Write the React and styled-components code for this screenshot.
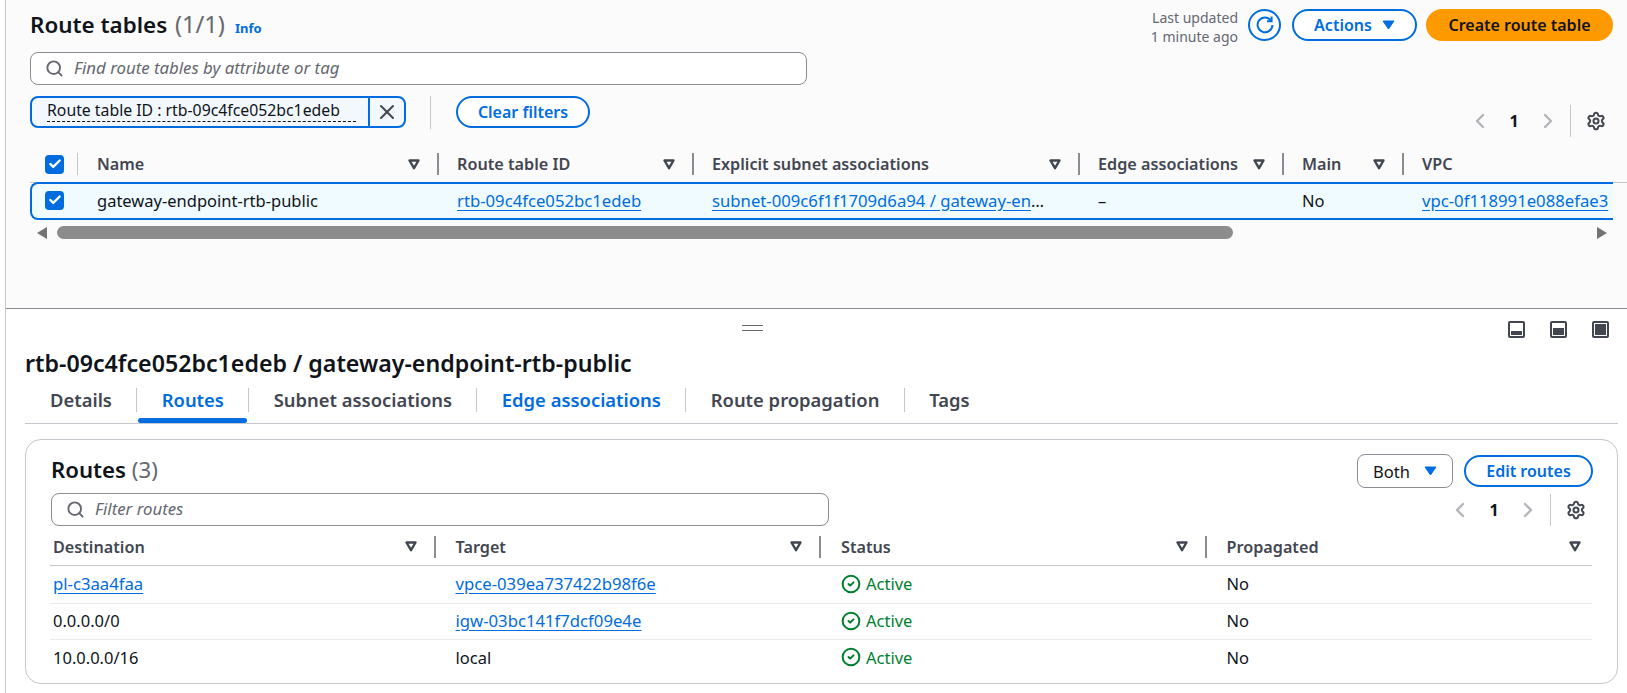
import React from "react"
import styled, { createGlobalStyle } from "styled-components"
import { Check, ChevronLeft, ChevronRight, CircleCheck, Search, Settings, X } from "lucide-react"

const Global = createGlobalStyle`
    html, body {
        margin: 0;
        padding: 0;
        background: #fff;
    }
    body {
        font-family: "Noto Sans", "Open Sans", sans-serif;
        font-size: 16.5px;
        color: #0f141a;
    }
    * {
        box-sizing: border-box;
    }
`

const blue = "#006ce0"
const grey = "#424650"

const topColumns = "49px 360px 255px 386px 204px 120px 209px"
const rowColumns = "47px 360px 255px 386px 204px 120px 209px"

const SortIcon = () => (
    <SortSvg viewBox="0 0 12 11">
        <path d="M1.5 1.5h9L6 9.2z" fill="none" stroke={grey} strokeWidth="2.4" strokeLinejoin="round" />
    </SortSvg>
)

const Caret = () => (
    <CaretSvg viewBox="0 0 13 10">
        <path d="M1 1h11L6.5 9z" fill={blue} stroke={blue} strokeWidth="1" strokeLinejoin="round" />
    </CaretSvg>
)

const Pager = ({ $top }) => (
    <PagerWrap $top={$top}>
        <ChevronLeft size={24} color="#b4b4bb" strokeWidth={2.4} />
        <PageNum>1</PageNum>
        <ChevronRight size={24} color="#b4b4bb" strokeWidth={2.4} />
        <PagerBar />
        <Settings size={20} color={grey} strokeWidth={2.4} />
    </PagerWrap>
)

const Box = () => (
    <CheckBox>
        <Check size={14} color="#fff" strokeWidth={4} />
    </CheckBox>
)

const TopHead = ({ label, last }) => (
    <HeadCell>
        <HeadLabel>{label}</HeadLabel>
        {!last && <SortIcon />}
        {!last && <Resizer />}
    </HeadCell>
)

const PanelIcon = ({ fill }) => (
    <PanelSvg viewBox="0 0 17 17">
        <rect x="1" y="1" width="15" height="15" rx="1" fill="none" stroke={grey} strokeWidth="2" />
        <rect x="3" y={17 - 3 - fill} width="11" height={fill} fill={grey} />
    </PanelSvg>
)

const routes = [
    { dest: "pl-c3aa4faa", destLink: true, target: "vpce-039ea737422b98f6e", targetLink: true },
    { dest: "0.0.0.0/0", target: "igw-03bc141f7dcf09e4e", targetLink: true },
    { dest: "10.0.0.0/16", target: "local" },
]

const tabs = ["Details", "Routes", "Subnet associations", "Edge associations", "Route propagation", "Tags"]

export default function App() {
    return (
        <Shell>
            <Global />
            <TopPanel>
                <HeaderRow>
                    <TitleGroup>
                        <PageTitle>Route tables <TitleCount>(1/1)</TitleCount></PageTitle>
                        <InfoLink>Info</InfoLink>
                    </TitleGroup>
                    <Updated>Last updated<br />1 minute ago</Updated>
                    <RefreshButton>
                        <svg width="22" height="22" viewBox="0 0 22 22" fill="none" stroke={blue} strokeWidth="2">
                            <path d="M17 6.5A7.4 7.4 0 1 0 18.4 11" />
                            <path d="M17.6 2.6V7.2H13" />
                        </svg>
                    </RefreshButton>
                    <OutlineButton $width={125}>Actions <Caret /></OutlineButton>
                    <PrimaryButton>Create route table</PrimaryButton>
                </HeaderRow>
                <SearchBox $width={777} $top={11}>
                    <Search size={19} color="#656871" strokeWidth={2.4} />
                    <Placeholder>Find route tables by attribute or tag</Placeholder>
                </SearchBox>
                <FilterRow>
                    <Token>
                        <TokenText>Route table ID : rtb-09c4fce052bc1edeb</TokenText>
                        <TokenClose><X size={24} color={grey} strokeWidth={2} /></TokenClose>
                    </Token>
                    <FilterBar />
                    <OutlineButton $width={134}>Clear filters</OutlineButton>
                    <Pager $top={9} />
                </FilterRow>
                <TopGrid>
                    <SelectCell><Box /><SelectBar /></SelectCell>
                    <TopHead label="Name" />
                    <TopHead label="Route table ID" />
                    <TopHead label="Explicit subnet associations" />
                    <TopHead label="Edge associations" />
                    <TopHead label="Main" />
                    <TopHead label="VPC" last />
                </TopGrid>
                <SelectedRow>
                    <RowSelect><Box /></RowSelect>
                    <BodyCell>gateway-endpoint-rtb-public</BodyCell>
                    <BodyCell><Link>rtb-09c4fce052bc1edeb</Link></BodyCell>
                    <BodyCell><Link>subnet-009c6f1f1709d6a94 / gateway-en</Link>…</BodyCell>
                    <BodyCell>–</BodyCell>
                    <BodyCell>No</BodyCell>
                    <BodyCell><Link>vpc-0f118991e088efae3</Link></BodyCell>
                </SelectedRow>
                <ScrollBar>
                    <ScrollArrow />
                    <ScrollThumb />
                    <ScrollArrow $right />
                </ScrollBar>
            </TopPanel>
            <BottomPanel>
                <ToolRow>
                    <DragHandle />
                    <PanelIcons>
                        <PanelIcon fill={4} />
                        <PanelIcon fill={7} />
                        <PanelIcon fill={11} />
                    </PanelIcons>
                </ToolRow>
                <DetailTitle>rtb-09c4fce052bc1edeb / gateway-endpoint-rtb-public</DetailTitle>
                <TabList>
                    {tabs.map((tab) => (
                        <Tab key={tab} $active={tab === "Routes"} $blue={tab === "Routes" || tab === "Edge associations"} $last={tab === "Tags"}>
                            {tab}
                        </Tab>
                    ))}
                </TabList>
                <Card>
                    <CardHeader>
                        <CardTitle>Routes <Count>(3)</Count></CardTitle>
                        <BothSelect>Both <Caret /></BothSelect>
                        <OutlineButton $width={129}>Edit routes</OutlineButton>
                    </CardHeader>
                    <CardFilter>
                        <SearchBox $width={778} $top={0}>
                            <Search size={19} color="#656871" strokeWidth={2.4} />
                            <Placeholder>Filter routes</Placeholder>
                        </SearchBox>
                        <Pager $top={1} />
                    </CardFilter>
                    <RoutesHead>
                        <RouteHeadCell $first><HeadLabel>Destination</HeadLabel><SortIcon /><Resizer /></RouteHeadCell>
                        <RouteHeadCell><HeadLabel>Target</HeadLabel><SortIcon /><Resizer /></RouteHeadCell>
                        <RouteHeadCell><HeadLabel>Status</HeadLabel><SortIcon /><Resizer /></RouteHeadCell>
                        <RouteHeadCell $last><HeadLabel>Propagated</HeadLabel><SortIcon /></RouteHeadCell>
                    </RoutesHead>
                    {routes.map((route, i) => (
                        <RouteRow key={route.dest} $tall={i === 0} $last={i === routes.length - 1}>
                            <RouteCell $first>{route.destLink ? <Link>{route.dest}</Link> : route.dest}</RouteCell>
                            <RouteCell>{route.targetLink ? <Link>{route.target}</Link> : route.target}</RouteCell>
                            <RouteCell><Status><CircleCheck size={20} strokeWidth={2.4} />Active</Status></RouteCell>
                            <RouteCell>No</RouteCell>
                        </RouteRow>
                    ))}
                </Card>
            </BottomPanel>
        </Shell>
    )
}

const Shell = styled.div`
    width: 1622px;
    height: 693px;
    margin-left: 5px;
    border-left: 1px solid #c6c6cd;
    overflow: hidden;
`

const TopPanel = styled.section`
    height: 309px;
    padding: 9px 0 0 24px;
    background: #fbfbfb;
    border-bottom: 1px solid #8c8c94;
`

const HeaderRow = styled.div`
    display: flex;
    align-items: center;
    height: 32px;
    width: 1583px;
`

const TitleGroup = styled.div`
    display: flex;
    align-items: baseline;
    margin-right: auto;
    margin-top: -3px;
`

const PageTitle = styled.h1`
    margin: 0;
    font-size: 22.4px;
    font-weight: 600;
    color: #0f141a;
`

const Count = styled.span`
    font-weight: 400;
    color: #656871;
`

const TitleCount = styled(Count)`
    margin-left: 2px;
    font-size: 23.6px;
`

const InfoLink = styled.span`
    margin-left: 10px;
    font-size: 13px;
    font-weight: 700;
    color: ${blue};
`

const Updated = styled.div`
    width: 100px;
    padding-top: 4px;
    text-align: right;
    font-size: 14px;
    line-height: 19px;
    color: #656871;
    white-space: nowrap;
`

const RefreshButton = styled.div`
    width: 33px;
    height: 32px;
    margin-left: 10px;
    border: 2px solid ${blue};
    border-radius: 50%;
    background: #fff;
    display: flex;
    align-items: center;
    justify-content: center;
`

const OutlineButton = styled.div`
    width: ${(p) => p.$width}px;
    height: 32px;
    margin-left: 11px;
    border: 2px solid ${blue};
    border-radius: 20px;
    background: #fff;
    color: ${blue};
    font-weight: 600;
    font-size: 16px;
    display: flex;
    align-items: center;
    justify-content: center;
    gap: 10px;
`

const PrimaryButton = styled.div`
    width: 187px;
    height: 32px;
    margin-left: 9px;
    border-radius: 20px;
    background: #ff9900;
    color: #0f141a;
    font-weight: 600;
    font-size: 16px;
    display: flex;
    align-items: center;
    justify-content: center;
`

const CaretSvg = styled.svg`
    width: 13px;
    height: 10px;
`

const SearchBox = styled.div`
    width: ${(p) => p.$width}px;
    height: 33px;
    margin-top: ${(p) => p.$top}px;
    padding-left: 14px;
    border: 1px solid #8c8c94;
    border-radius: 8px;
    background: #fff;
    display: flex;
    align-items: center;
    gap: 10px;
`

const Placeholder = styled.span`
    font-style: italic;
    font-size: 16.8px;
    color: #656871;
    margin-top: -2px;
`

const FilterRow = styled.div`
    display: flex;
    align-items: flex-start;
    height: 41px;
    margin-top: 11px;
    width: 1583px;
`

const Token = styled.div`
    width: 376px;
    height: 32px;
    border: 2px solid ${blue};
    border-radius: 8px;
    background: #f2f8fd;
    display: flex;
    align-items: stretch;
`

const TokenText = styled.span`
    flex: 1;
    margin: 2px 12px 4px 15px;
    font-size: 15.8px;
    line-height: 21px;
    white-space: nowrap;
    border-bottom: 1px dashed #0f141a;
`

const TokenClose = styled.span`
    width: 36px;
    border-left: 2px solid ${blue};
    display: flex;
    align-items: center;
    justify-content: center;
`

const FilterBar = styled.div`
    width: 1px;
    height: 33px;
    margin-left: 24px;
    background: #c6c6cd;
    margin-right: 14px;
`

const PagerWrap = styled.div`
    display: flex;
    align-items: center;
    height: 32px;
    margin-top: ${(p) => p.$top}px;
    margin-left: auto;
    padding-right: 7px;
`

const PageNum = styled.span`
    width: 44px;
    text-align: center;
    font-weight: 700;
    font-size: 16px;
`

const PagerBar = styled.div`
    width: 1px;
    height: 32px;
    margin-left: 10px;
    margin-right: 15px;
    background: #c6c6cd;
`

const TopGrid = styled.div`
    display: grid;
    grid-template-columns: ${topColumns};
    height: 37px;
    margin-top: 9px;
    border-bottom: 1px solid #c6c6cd;
`

const SelectCell = styled.div`
    display: flex;
    align-items: center;
    padding-left: 15px;
`

const SelectBar = styled.div`
    width: 1px;
    height: 22px;
    margin-left: 13px;
    background: #c6c6cd;
`

const CheckBox = styled.div`
    width: 19px;
    height: 19px;
    border-radius: 4px;
    background: ${blue};
    display: flex;
    align-items: center;
    justify-content: center;
`

const HeadCell = styled.div`
    display: flex;
    align-items: center;
    min-width: 0;
    padding-left: 18px;
`

const HeadLabel = styled.span`
    flex: 1;
    font-weight: 600;
    font-size: 16.2px;
    color: ${grey};
    white-space: nowrap;
`

const SortSvg = styled.svg`
    width: 12px;
    height: 11px;
    flex: none;
`

const Resizer = styled.div`
    width: 2px;
    height: 22px;
    margin-left: 17px;
    background: #8c8c94;
    flex: none;
`

const SelectedRow = styled.div`
    display: grid;
    grid-template-columns: ${rowColumns};
    height: 38px;
    width: 1583px;
    padding-bottom: 2px;
    border: 2px solid ${blue};
    border-right: none;
    border-radius: 8px 0 0 8px;
    background: #f0fbff;
    margin-top: -1px;
    align-items: center;
`

const RowSelect = styled.div`
    padding-left: 13px;
    display: flex;
`

const BodyCell = styled.div`
    padding-left: 18px;
    white-space: nowrap;
    overflow: hidden;
`

const Link = styled.span`
    color: ${blue};
    font-size: 16.7px;
    text-decoration: underline;
    text-underline-offset: 3px;
`

const ScrollBar = styled.div`
    display: flex;
    align-items: center;
    gap: 10px;
    width: 1583px;
    height: 13px;
    margin-top: 6px;
    padding: 0 6px 0 7px;
`

const ScrollArrow = styled.div`
    width: 0;
    height: 0;
    border-top: 6px solid transparent;
    border-bottom: 6px solid transparent;
    border-${(p) => (p.$right ? "left" : "right")}: 10px solid #737373;
    margin-left: ${(p) => (p.$right ? "auto" : "0")};
`

const ScrollThumb = styled.div`
    width: 1176px;
    height: 13px;
    border-radius: 7px;
    background: #8c8c8c;
`

const BottomPanel = styled.section`
    padding: 12px 9px 0 19px;
    background: #fff;
`

const ToolRow = styled.div`
    display: flex;
    align-items: flex-start;
    height: 17px;
    padding-left: 717px;
    padding-right: 9px;
`

const DragHandle = styled.div`
    width: 21px;
    height: 6px;
    margin-top: 4px;
    border-top: 1px solid #656871;
    border-bottom: 1px solid #656871;
`

const PanelIcons = styled.div`
    display: flex;
    gap: 25px;
    margin-left: auto;
`

const PanelSvg = styled.svg`
    width: 17px;
    height: 17px;
`

const DetailTitle = styled.h2`
    margin: 10px 0 0;
    font-size: 23.2px;
    line-height: 30px;
    font-weight: 600;
    color: #0f141a;
    white-space: nowrap;
`

const TabList = styled.div`
    display: flex;
    height: 46px;
    padding-top: 10px;
    border-bottom: 1px solid #c6c6cd;
`

const Tab = styled.div`
    position: relative;
    height: 24px;
    padding: 0 24.4px;
    line-height: 24px;
    font-weight: 600;
    font-size: 18.4px;
    white-space: nowrap;
    color: ${(p) => (p.$blue ? blue : grey)};
    border-right: ${(p) => (p.$last ? "none" : "1px solid #c6c6cd")};

    &:first-child {
        padding-left: 25px;
    }

    ${(p) => p.$active && `
        &::after {
            content: "";
            position: absolute;
            left: 1px;
            right: 1px;
            top: 30px;
            height: 5px;
            border-radius: 3px;
            background: ${blue};
        }
    `}
`

const Card = styled.div`
    height: 245px;
    margin-top: 15px;
    padding: 14px 24px 0 25px;
    border: 1px solid #c6c6cd;
    border-radius: 16px;
    background: #fff;
`

const CardHeader = styled.div`
    display: flex;
    align-items: center;
    height: 34px;
`

const CardTitle = styled.h3`
    margin: -3px auto 0 0;
    font-size: 22.2px;
    font-weight: 600;
    color: #0f141a;
`

const BothSelect = styled.div`
    width: 96px;
    height: 34px;
    padding-left: 15px;
    border: 1px solid #8c8c94;
    border-radius: 8px;
    display: flex;
    align-items: center;
    gap: 14px;
`

const CardFilter = styled.div`
    display: flex;
    align-items: flex-start;
    height: 38px;
    margin-top: 5px;
`

const RoutesHead = styled.div`
    display: grid;
    grid-template-columns: repeat(4, 1fr);
    height: 35px;
    margin-left: -1px;
    margin-right: 1px;
    border-bottom: 1px solid #c6c6cd;
`

const RouteHeadCell = styled.div`
    display: flex;
    align-items: center;
    padding-left: ${(p) => (p.$first ? 3 : 20)}px;
    padding-right: ${(p) => (p.$last ? 11 : 0)}px;
    padding-bottom: 3px;
`

const RouteRow = styled.div`
    display: grid;
    grid-template-columns: repeat(4, 1fr);
    align-items: center;
    height: ${(p) => (p.$tall ? 38 : 36)}px;
    margin-left: -1px;
    margin-right: 1px;
    padding-bottom: 2px;
    border-bottom: ${(p) => (p.$last ? "none" : "1px solid #e9ebed")};
`

const RouteCell = styled.div`
    display: flex;
    align-items: center;
    padding-left: ${(p) => (p.$first ? 3 : 20)}px;
`

const Status = styled.span`
    display: flex;
    align-items: center;
    gap: 5px;
    color: #00802f;
`
